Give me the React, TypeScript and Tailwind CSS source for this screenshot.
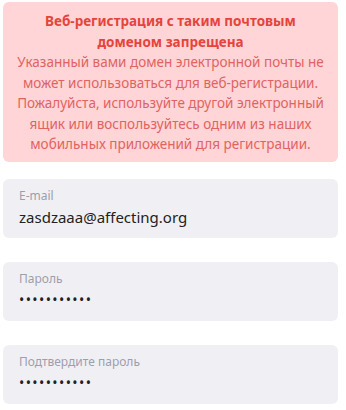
import React from "react";

function Field({ label, value, type = "text" }: { label: string; value: string; type?: string }) {
  const isPassword = type === "password";
  return (
    <label className="flex h-[59px] flex-col rounded-md bg-[#f0f0f4] px-4 pt-[8px]">
      <span className="text-[12px] leading-[18px] text-[#9e9eab]">{label}</span>
      <input
        type={type}
        readOnly
        value={value}
        className={
          isPassword
            ? "h-[24px] w-full bg-transparent text-[14px] leading-[24px] tracking-[1.4px] text-[#222] outline-none"
            : "h-[24px] w-full bg-transparent text-[15px] leading-[24px] text-[#222] outline-none"
        }
        style={{ fontFamily: "'Noto Sans', sans-serif" }}
      />
    </label>
  );
}

export default function App() {
  return (
    <div className="w-[346px] h-[410px] overflow-hidden bg-white pl-[3px] pr-[8px] pt-[2px] font-['Noto_Sans',sans-serif]">
      <div className="rounded-md bg-[#ffd5d7] px-3 pt-[9px] pb-[7px] text-center text-[13.5px] leading-[20.5px]">
        <p className="font-bold text-[#e5443c]">Веб-регистрация с таким почтовым доменом запрещена</p>
        <p className="text-[#df6362]">
          Указанный вами домен электронной почты не может использоваться для веб-регистрации. Пожалуйста,
          используйте другой электронный ящик или воспользуйтесь одним из наших мобильных приложений для
          регистрации.
        </p>
      </div>
      <div className="mt-[17px] flex flex-col gap-[24px]">
        <Field label="E-mail" value="zasdzaaa@affecting.org" />
        <Field label="Пароль" value="12345678901" type="password" />
        <Field label="Подтвердите пароль" value="12345678901" type="password" />
      </div>
    </div>
  );
}
